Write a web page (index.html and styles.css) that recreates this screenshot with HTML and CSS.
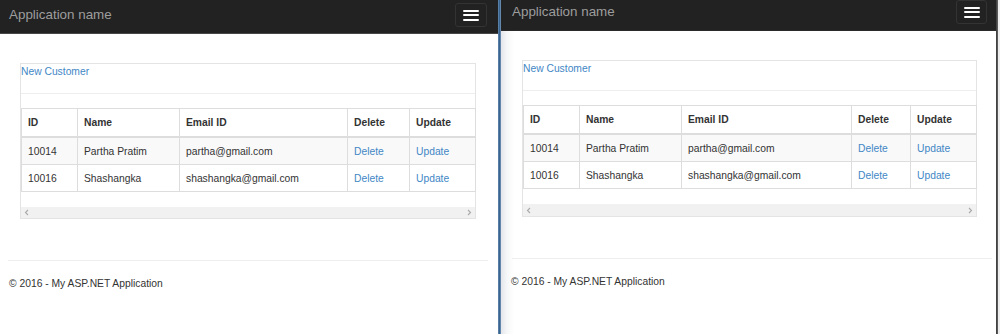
FILE: index.html
```html
<!DOCTYPE html>
<html lang="en">
<head>
<meta charset="utf-8">
<title>Customers</title>
<link rel="stylesheet" href="styles.css">
</head>
<body>
<div class="desk">
  <section class="pane pane-left">
    <div class="page">
      <nav class="navbar">
        <span class="brand">Application name</span>
        <button class="toggle" type="button" aria-label="Toggle navigation">
          <span class="bar"></span><span class="bar"></span><span class="bar"></span>
        </button>
      </nav>
      <main class="content">
        <div class="gridbox">
          <div class="grid-top"><a href="#">New Customer</a></div>
          <div class="grid-gap"></div>
          <table class="grid">
            <colgroup><col class="c-id"><col class="c-name"><col class="c-email"><col class="c-del"><col class="c-upd"></colgroup>
            <thead>
              <tr><th>ID</th><th>Name</th><th>Email ID</th><th>Delete</th><th>Update</th></tr>
            </thead>
            <tbody>
              <tr><td>10014</td><td>Partha Pratim</td><td>partha@gmail.com</td><td><a href="#">Delete</a></td><td><a href="#">Update</a></td></tr>
              <tr><td>10016</td><td>Shashangka</td><td>shashangka@gmail.com</td><td><a href="#">Delete</a></td><td><a href="#">Update</a></td></tr>
            </tbody>
          </table>
          <div class="grid-after"></div>
          <div class="hscroll">
            <svg width="6" height="7" viewBox="0 0 6 7"><path d="M4 1 L1.5 3.5 L4 6" fill="none" stroke="#a9a9a9" stroke-width="1.1"/></svg>
            <svg width="6" height="7" viewBox="0 0 6 7"><path d="M2 1 L4.5 3.5 L2 6" fill="none" stroke="#a9a9a9" stroke-width="1.1"/></svg>
          </div>
        </div>
        <hr class="rule">
        <footer class="foot">© 2016 - My ASP.NET Application</footer>
      </main>
    </div>
  </section>
  <div class="divider"></div>
  <section class="pane pane-right">
    <div class="page">
      <nav class="navbar">
        <span class="brand">Application name</span>
        <button class="toggle" type="button" aria-label="Toggle navigation">
          <span class="bar"></span><span class="bar"></span><span class="bar"></span>
        </button>
      </nav>
      <main class="content">
        <div class="gridbox">
          <div class="grid-top"><a href="#">New Customer</a></div>
          <div class="grid-gap"></div>
          <table class="grid">
            <colgroup><col class="c-id"><col class="c-name"><col class="c-email"><col class="c-del"><col class="c-upd"></colgroup>
            <thead>
              <tr><th>ID</th><th>Name</th><th>Email ID</th><th>Delete</th><th>Update</th></tr>
            </thead>
            <tbody>
              <tr><td>10014</td><td>Partha Pratim</td><td>partha@gmail.com</td><td><a href="#">Delete</a></td><td><a href="#">Update</a></td></tr>
              <tr><td>10016</td><td>Shashangka</td><td>shashangka@gmail.com</td><td><a href="#">Delete</a></td><td><a href="#">Update</a></td></tr>
            </tbody>
          </table>
          <div class="grid-after"></div>
          <div class="hscroll">
            <svg width="6" height="7" viewBox="0 0 6 7"><path d="M4 1 L1.5 3.5 L4 6" fill="none" stroke="#a9a9a9" stroke-width="1.1"/></svg>
            <svg width="6" height="7" viewBox="0 0 6 7"><path d="M2 1 L4.5 3.5 L2 6" fill="none" stroke="#a9a9a9" stroke-width="1.1"/></svg>
          </div>
        </div>
        <hr class="rule">
        <footer class="foot">© 2016 - My ASP.NET Application</footer>
      </main>
    </div>
  </section>
  <div class="edge"></div>
</div>
</body>
</html>
```

FILE: styles.css
```css
* { box-sizing: border-box; }

html, body { margin: 0; padding: 0; }

body {
  width: 1000px;
  height: 334px;
  overflow: hidden;
  background: #fff;
  color: #333;
  font-family: "Liberation Sans", Arial, Helvetica, sans-serif;
  font-size: 10.3px;
  line-height: 14px;
}

a { color: #4287c6; text-decoration: none; }

.desk {
  display: flex;
  height: 334px;
}

.pane {
  height: 334px;
  overflow: hidden;
  background: #fff;
}

.pane-left { width: 498px; }

.pane-right {
  width: 495px;
  background: linear-gradient(to right, #e3e6ea 0, #f6f7f8 6px, #fff 13px);
}

.divider {
  width: 3px;
  background: linear-gradient(to right, #7e9cbd 0, #34618e 1px, #3d6892 2px, #8aa6c3 3px);
}

.edge {
  width: 4px;
  background: linear-gradient(to right, #2b2b2b 0, #5a5a5a 1px, #5a5a5a 2px, #ededed 2px);
}

.pane-right .page { margin-top: -3px; }

/* navbar */
.navbar {
  height: 34px;
  background: #222;
  border-bottom: 1px solid #464646;
  display: flex;
  align-items: flex-start;
  justify-content: space-between;
  padding: 0 11px 0 9px;
}

.pane-right .navbar {
  padding: 0 9px 0 11px;
  border-bottom-color: #2a2a2a;
}

.brand {
  margin-top: 6px;
  font-size: 13.4px;
  line-height: 18px;
  color: #9d9d9d;
}

.toggle {
  margin: 3px 0 0;
  width: 32px;
  height: 24px;
  padding: 0;
  background: #222;
  border: 1px solid #333;
  border-radius: 3px;
  display: flex;
  flex-direction: column;
  align-items: center;
  justify-content: center;
  gap: 2.5px;
}

.pane-right .toggle { width: 31px; }

.bar {
  display: block;
  width: 16px;
  height: 2px;
  background: #fff;
  border-radius: 1px;
}

/* content */
.content {
  padding: 29px 10px 0 8px;
}

.pane-right .content {
  padding: 29px 4px 0 11px;
}

.gridbox {
  margin-left: 12px;
  width: 456px;
  border: 1px solid #e4e4e4;
}

.pane-right .gridbox {
  margin-left: 10px;
  width: 455px;
}

.grid-top {
  height: 30px;
  padding-top: 1px;
  border-bottom: 1px solid #eee;
}

.grid-gap { height: 14px; }

.grid {
  width: 100%;
  border-collapse: collapse;
  table-layout: fixed;
}

.grid th,
.grid td {
  border: 1px solid #ddd;
  padding: 6px;
  line-height: 14px;
  text-align: left;
  vertical-align: top;
  white-space: nowrap;
  overflow: hidden;
}

.grid td { padding: 7px 6px 5px; }

.grid th {
  font-weight: bold;
  border-bottom-width: 2px;
  color: #333;
  padding: 7px 6px 6px;
}

.grid tbody tr:nth-child(odd) { background: #f9f9f9; }

.c-id { width: 56px; }
.c-name { width: 102px; }
.c-email { width: 168px; }
.c-del { width: 62px; }
.c-upd { width: 66px; }

.pane-right .c-email { width: 170px; }
.pane-right .c-del { width: 59px; }

.grid-after { height: 15px; }

.hscroll {
  height: 11px;
  background: #f1f1f1;
  display: flex;
  align-items: center;
  justify-content: space-between;
  padding: 0 3px;
}

.pane-right .hscroll { height: 12px; }

/* footer */
.rule {
  margin: 41px 0 0;
  border: 0;
  border-top: 1px solid #eee;
  height: 0;
}

.foot {
  margin-top: 16px;
  padding-left: 1px;
}

.pane-right .foot { padding-left: 0; margin-left: -1px; }
```
